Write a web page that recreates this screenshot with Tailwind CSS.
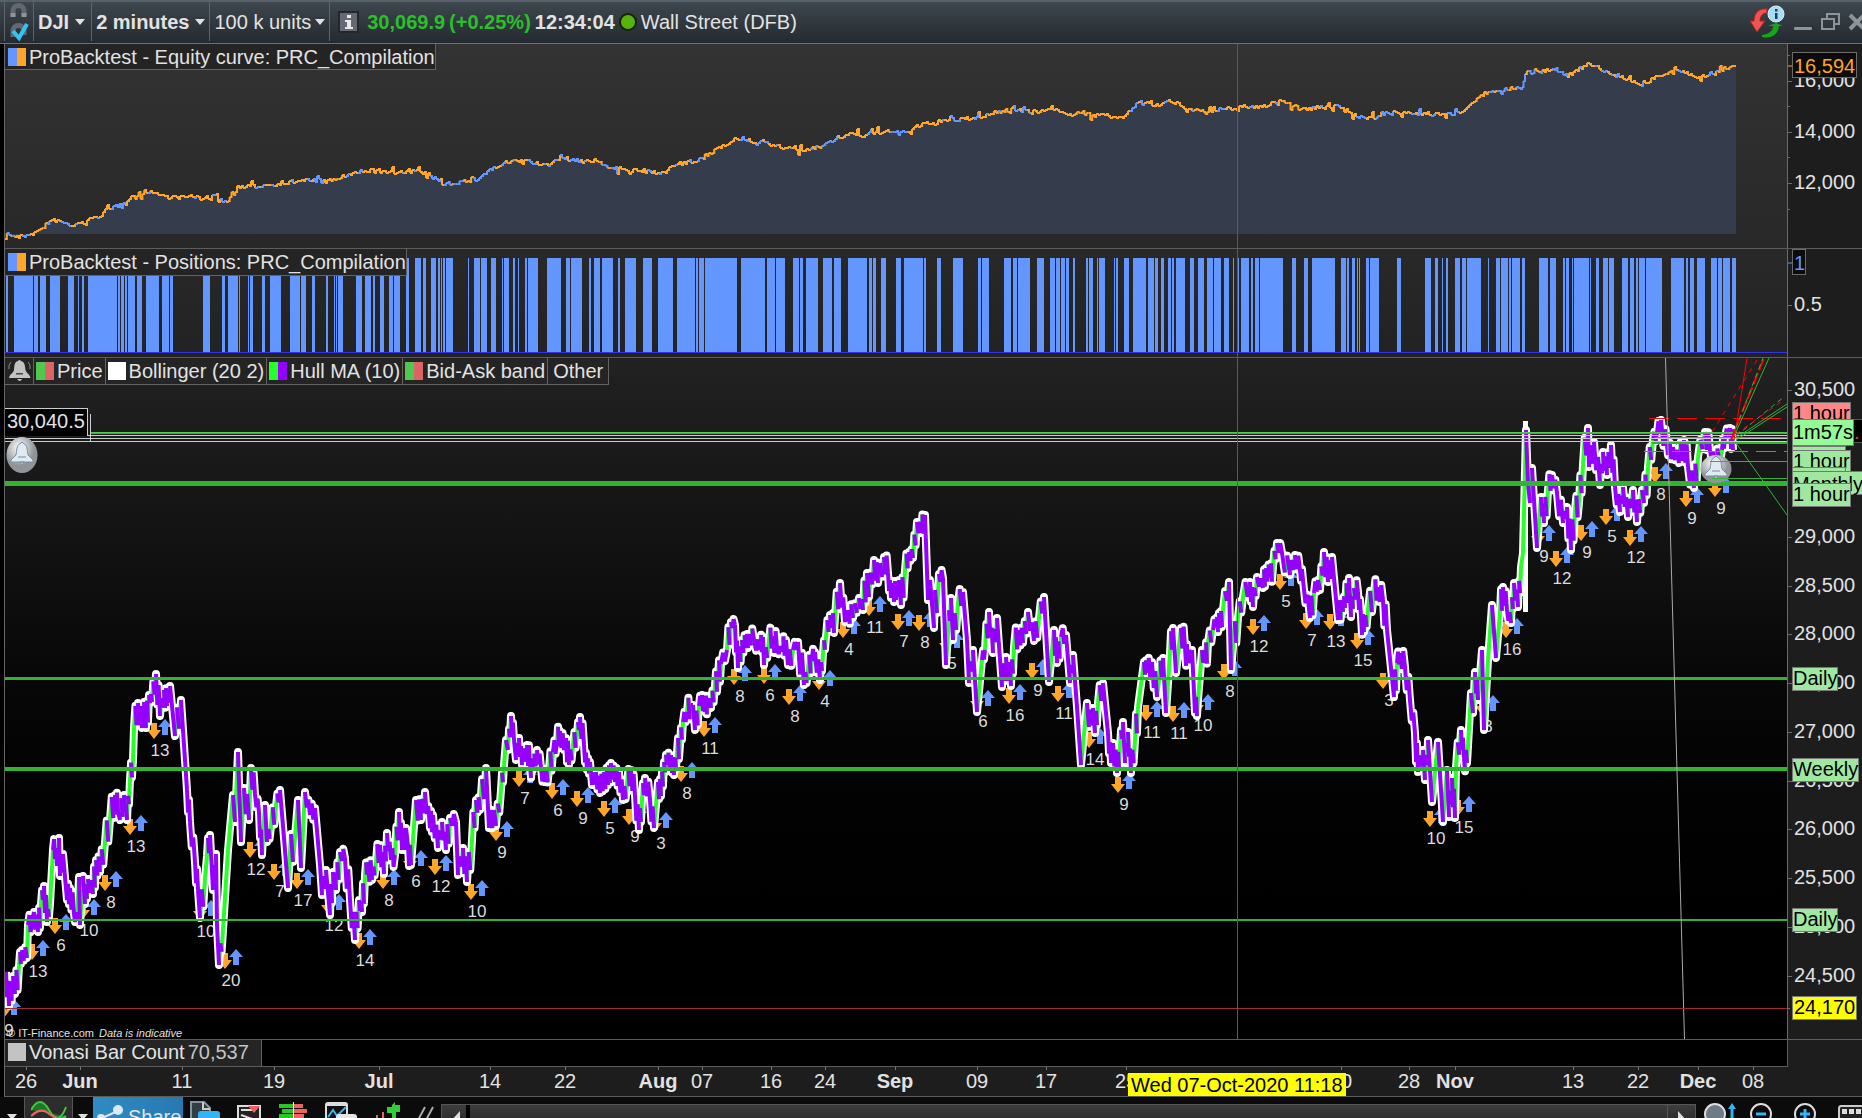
<!DOCTYPE html>
<html lang="en">

<head>
  <meta charset="UTF-8">
  <title>DJI - 2 minutes</title>
  <script src="https://cdn.jsdelivr.net/npm/@tailwindcss/browser@4"></script>
</head>

<body class="h-screen overflow-hidden bg-black text-[20px] leading-6 text-[#e2e2e2] font-['Liberation_Sans',Arial,sans-serif]">
  <div class="flex flex-col">

    <!-- Top bar -->
    <header class="flex h-11 items-stretch justify-between overflow-hidden border-t-2 border-b border-t-[#566068] border-b-[#6b7074] bg-linear-to-b from-[#3f474e] to-[#232a30] pb-0.5 pl-1">
      <div class="flex items-stretch whitespace-nowrap">
        <button class="flex w-[30px] items-center justify-center border-x border-[#5d656b]" aria-label="Link windows">
          <svg width="22" height="40" viewBox="0 0 22 40" fill="none">
            <path d="M5 14V9a5 5 0 0 1 11 0v5" stroke="#62686d" stroke-width="5" />
            <path d="M5 11v4M16 11v4" stroke="#8e9498" stroke-width="5" />
            <path d="M5 35v-6a5 5 0 0 1 11 0v4" stroke="#62686d" stroke-width="5" />
            <path d="M5 29l6 7 8-14" stroke="#35c3f3" stroke-width="4" />
          </svg>
        </button>
        <label class="flex items-center gap-1.5 border-r border-[#5d656b] pr-1.5 pl-1 font-bold">
          <select aria-label="Instrument" class="field-sizing-content appearance-none font-bold outline-none"><option>DJI</option></select>
          <svg width="10" height="6" viewBox="0 0 10 6"><path d="M0 0h10L5 6z" fill="#e2e2e2" /></svg>
        </label>
        <label class="flex items-center gap-1.5 border-r border-[#5d656b] pr-1 pl-1">
          <select aria-label="Timeframe" class="field-sizing-content appearance-none font-bold outline-none"><option>2 minutes</option></select>
          <svg width="10" height="6" viewBox="0 0 10 6"><path d="M0 0h10L5 6z" fill="#e2e2e2" /></svg>
        </label>
        <label class="flex items-center gap-1 border-r border-[#5d656b] pr-1 pl-1">
          <select aria-label="Units" class="field-sizing-content appearance-none outline-none"><option>100 k units</option></select>
          <svg width="10" height="6" viewBox="0 0 10 6"><path d="M0 0h10L5 6z" fill="#e2e2e2" /></svg>
        </label>
        <div class="flex items-center pl-2">
          <button class="mr-2 flex h-[22px] w-[21px] items-center justify-center border-2 border-[#24282c] bg-[#666973]" aria-label="Information">
            <svg width="12" height="16" viewBox="0 0 12 16" fill="#e8e8e8"><path d="M4 1h4v3H4zM2 6h6v7h2v2H2v-2h2V8H2z" /></svg>
          </button>
          <span class="font-bold text-[#2bbf2b]">30,069.9</span>
          <span class="ml-1 font-bold text-[#2bbf2b]">(+0.25%)</span>
          <span class="ml-1 font-bold">12:34:04</span>
          <span class="mx-1 size-[18px] rounded-full border-2 border-[#152406] bg-[#55b30b]"></span>
          <span>Wall Street (DFB)</span>
        </div>
      </div>
      <div class="flex items-center gap-2">
        <button aria-label="Synchronise">
          <svg width="36" height="36" viewBox="0 0 36 36">
            <path d="M17 5C9 4 4 9 4 17H0l7 11 8-11h-5c0-4 2-8 7-8z" fill="#f05353" stroke="#b02020" />
            <path d="M12 33c9 2 16-2 17-11h4l-7-3-8 3h5c0 5-4 8-11 9z" fill="#15a615" />
            <circle cx="26" cy="10" r="8" fill="#a7dcf5" stroke="#d8eefa" />
            <path d="M25 5h2.500v2.500H25zM25 9h2.500v6H25z" fill="#17405c" />
          </svg>
        </button>
        <button aria-label="Minimise">
          <svg width="18" height="20" viewBox="0 0 18 20"><rect y="15" width="18" height="3" rx="1" fill="#8e959a" /></svg>
        </button>
        <button aria-label="Restore">
          <svg width="20" height="20" viewBox="0 0 20 20" fill="none" stroke="#8e959a" stroke-width="2"><path d="M7 6V2h12v10h-4" /><rect x="2" y="7" width="12" height="10" /></svg>
        </button>
        <button class="-mr-1" aria-label="Close">
          <svg width="18" height="20" viewBox="0 0 18 20" stroke="#8e959a" stroke-width="4"><path d="M2 3l14 14M16 3L2 17" /></svg>
        </button>
      </div>
    </header>

    <main class="ml-1 border-l border-[#666] bg-[#1d1d1d]">
      <!-- Equity curve -->
      <section class="flex border-b border-[#5c5c5c]">
        <div class="relative min-w-0 flex-1 bg-linear-to-b from-[#333] to-[#282828]">
          <button class="absolute top-0 left-0 flex h-[26px] items-center gap-[3px] border-r border-b border-[#636363] bg-[#242424] pl-[3px] whitespace-nowrap">
            <span class="h-[18px] w-[18px] bg-linear-to-r from-[#6496ff] from-50% to-[#ffa528] to-50%"></span>ProBacktest - Equity curve: PRC_Compilation
          </button>
          <svg id="equity" class="block h-[204px] w-full" viewBox="5 44 1782 204" preserveAspectRatio="none"></svg>
        </div>
        <svg id="equityAxis" class="h-[204px] w-[75px] shrink-0" viewBox="1787 44 75 204"></svg>
      </section>

      <!-- Positions -->
      <section class="flex border-b border-[#5c5c5c]">
        <div class="relative min-w-0 flex-1 bg-linear-to-b from-[#292929] to-[#222]">
          <button class="absolute top-0 left-0 flex h-[27px] items-center gap-[3px] border-r border-b border-[#636363] bg-[#242424] pl-[3px] whitespace-nowrap">
            <span class="h-[18px] w-[18px] bg-linear-to-r from-[#6496ff] from-50% to-[#ffa528] to-50%"></span>ProBacktest - Positions: PRC_Compilation
          </button>
          <svg id="positions" class="block h-[108px] w-full" viewBox="5 249 1782 108" preserveAspectRatio="none"></svg>
        </div>
        <svg id="positionsAxis" class="h-[108px] w-[75px] shrink-0" viewBox="1787 249 75 108"></svg>
      </section>

      <!-- Price -->
      <section class="flex border-b border-[#5c5c5c]">
        <div class="relative min-w-0 flex-1 overflow-hidden bg-linear-to-b from-[#222] to-black">
          <div class="absolute top-0 left-0 flex h-[27px] items-stretch border-b border-[#636363] bg-[#242424] whitespace-nowrap">
            <button class="flex w-[29px] items-center justify-center border-r border-[#636363]" aria-label="Alerts">
              <svg width="25" height="24" viewBox="0 0 25 24" fill="#c2c2c2">
                <path d="M11 2q1.500-2 3 0c4 1 4 5 4.500 9 .5 3 4.500 4 5 8H2c.5-4 4.500-5 5-8 .5-4 0-8 4-9zM10 20h5q-2 4-5 0z" />
                <path d="M9 14h7v1.500H9z" fill="#444" />
                <path d="M4 3q-3 3-2 7M21 3q3 3 2 7" fill="none" stroke="#888" />
              </svg>
            </button>
            <button class="flex items-center gap-[3px] border-r border-[#636363] px-0.5">
              <span class="h-[18px] w-[18px] bg-linear-to-r from-[#50c850] from-50% to-[#dc6464] to-50%"></span>Price
            </button>
            <button class="flex items-center gap-[3px] border-r border-[#636363] px-0.5">
              <span class="h-[18px] w-[18px] bg-white"></span>Bollinger (20 2)
            </button>
            <button class="flex items-center gap-[3px] border-r border-[#636363] px-0.5">
              <span class="h-[18px] w-[18px] bg-linear-to-r from-[#28ff28] from-50% to-[#9600ff] to-50%"></span>Hull MA (10)
            </button>
            <button class="flex items-center gap-[3px] border-r border-[#636363] px-0.5">
              <span class="h-[18px] w-[18px] bg-linear-to-r from-[#50c850] from-50% to-[#dc6464] to-50%"></span>Bid-Ask band
            </button>
            <button class="border-r border-[#636363] px-[5px]">Other</button>
          </div>
          <svg id="price" class="block h-[681px] w-full" viewBox="5 358 1782 681" preserveAspectRatio="xMinYMin slice"></svg>
          <div class="absolute top-[50px] left-0 h-7 border-t border-r border-[#ccc] bg-black px-0.5">30,040.5</div>
          <small class="absolute bottom-0 left-0 px-0.5 text-[11px] leading-3">© IT-Finance.com <i class="ml-0.5">Data is indicative</i></small>
        </div>
        <div class="relative w-[75px] shrink-0 text-black">
          <svg id="priceAxis" class="h-[681px] w-[75px]" viewBox="1787 358 75 681"></svg>
          <div class="absolute top-[44px] left-[5px] h-6 border border-[#777] bg-[#ff8787] leading-5">1 hour</div>
          <div class="absolute top-[88px] left-[5px] h-4 w-[54px] border border-[#777] bg-[#a0e8a0]"></div>
          <div class="absolute top-[92px] left-[5px] h-6 border border-[#777] bg-[#a0e8a0] leading-5">1 hour</div>
          <div class="absolute top-[109px] left-[5px] h-4 w-[54px] border border-[#777] bg-[#a0e8a0]"></div>
          <div class="absolute top-[61px] left-[67px] h-6 w-2 border-y border-[#555] bg-black leading-6 text-[#e33]">.</div>
          <div class="absolute top-[61px] left-[5px] h-[27px] border border-[#777] bg-[#96fa96]">1m57s</div>
          <div class="absolute top-[113px] left-[5px] h-6 border border-[#777] bg-[#a0e8a0]">Monthly</div>
          <div class="absolute top-[125px] left-[5px] h-6 border border-[#777] bg-[#a0e8a0] leading-5">1 hour</div>
          <div class="absolute top-[309px] left-[5px] h-6 border border-[#777] bg-[#a0e8a0] leading-5">Daily</div>
          <div class="absolute top-[400px] left-[5px] h-6 border border-[#777] bg-[#a0e8a0] leading-5">Weekly</div>
          <div class="absolute top-[550px] left-[5px] h-6 border border-[#777] bg-[#a0e8a0] leading-5">Daily</div>
          <div class="absolute top-[638px] left-[5px] h-6 border border-[#777] bg-[#ff0] px-px leading-5">24,170</div>
        </div>
      </section>

      <!-- Bar count -->
      <section class="flex h-[27px]">
        <div class="flex-1 border-r border-b border-[#5c5c5c] bg-black">
          <button class="flex h-[26px] w-[257px] items-center gap-[3px] border-r border-[#636363] bg-[#242424] pb-0.5 pl-[3px]">
            <span class="h-[18px] w-[18px] bg-[#c3c3c3]"></span>Vonasi Bar Count <span class="text-[#c3c3c3]">70,537</span>
          </button>
        </div>
        <div class="w-[74px]"></div>
      </section>

      <!-- Time axis -->
      <section class="relative h-[30px] overflow-hidden border-b border-[#5c5c5c]">
        <svg id="timeAxis" class="block h-[30px] w-full" viewBox="5 1067 1857 30" preserveAspectRatio="xMinYMin slice"></svg>
        <div class="absolute top-[6px] left-[1123px] h-6 bg-[#ff0] px-[3px] whitespace-nowrap text-black">Wed 07-Oct-2020 11:18</div>
      </section>
    </main>

    <!-- Bottom toolbar -->
    <footer class="flex h-10 items-stretch overflow-hidden bg-[#0b0b0b]">
      <button class="flex w-[25px] items-center justify-center border-r border-[#555]" aria-label="More drawings"><svg width="10" height="6" viewBox="0 0 10 6"><path d="M0 0h10L5 6z" fill="#ddd" /></svg></button>
      <button class="w-12 border-r border-[#555] bg-[#2d2d2d] pl-1.5" aria-label="Indicators">
        <svg width="36" height="32" viewBox="0 0 36 32" fill="none" stroke-width="2"><path d="M0 9Q9-7 18 9q8 14 17 6" fill="#1b7a24" stroke="#41c641" /><path d="M0 15q10-9 17-3t19 7" stroke="#f36363" /><path d="M22 17q8 3 13-11" stroke="#41c641" /></svg>
      </button>
      <button class="flex w-5 items-center justify-center" aria-label="More indicators"><svg width="10" height="6" viewBox="0 0 10 6"><path d="M0 0h10L5 6z" fill="#ddd" /></svg></button>
      <button class="flex w-[90px] items-center gap-1 bg-linear-to-r from-[#2f8cc4] to-[#2878b0] pl-1">
        <svg width="27" height="28" viewBox="0 0 27 28" fill="#dce9f3" stroke="#dce9f3" stroke-width="2"><path d="M5 15L21 8M5 15l16 7" /><circle cx="4" cy="15" r="3" /><circle cx="21" cy="7" r="4" /><circle cx="21" cy="23" r="4" /></svg>Share
      </button>
      <div class="flex items-start gap-4 pt-1 pr-1.5 pl-[7px]">
        <button aria-label="Notes"><svg width="31" height="30" viewBox="0 0 31 30"><path d="M1 1h13l6 6v20H1z" fill="#333d45" stroke="#87939c" stroke-width="2" /><path d="M13 1v7h7" fill="none" stroke="#ccc" stroke-width="2" /><rect x="8" y="10" width="22" height="15" rx="3" fill="#31b5f5" /></svg></button>
        <button aria-label="Orders"><svg width="25" height="30" viewBox="0 0 25 30"><path d="M1 5h22v24H1z" fill="#222" stroke="#ddd" stroke-width="2" /><path d="M4 9h11M4 14l14 5M4 18h8" stroke="#ddd" stroke-width="2" /><path d="M11 5h12l-6 7z" fill="#f06060" /></svg></button>
        <button aria-label="Order book"><svg width="30" height="30" viewBox="0 0 30 30"><path d="M1 3h14v4H1zM4 8h11v4H4zM1 13h14v4H1z" fill="#29c529" /><path d="M16 3h9v4h-9zM16 8h13v4H16zM16 13h10v4H16z" fill="#ec6363" /><path d="M15 1h1v18h-1z" fill="#eee" /></svg></button>
        <button aria-label="Trade from chart"><svg width="35" height="30" viewBox="0 0 35 30"><rect x="1" y="1" width="23" height="27" rx="3" fill="#dcdcdc" /><path d="M3 5h19v14H3z" fill="#111" /><path d="M4 16l5-7 4 6 9-9" stroke="#36b6ef" stroke-width="2" fill="none" /><rect x="12" y="13" width="21" height="14" rx="3" fill="#e4e4e4" /></svg></button>
        <button aria-label="Candles"><svg width="26" height="30" viewBox="0 0 26 30"><path d="M2 14v10M8 11v10" stroke="#ec6363" stroke-width="2" /><path d="M12 6h5V4l3-3v3h5v7h-4v15h-4V12h-5z" fill="#2fcf3a" /></svg></button>
        <svg width="18" height="24" viewBox="0 0 18 24" stroke="#aaa" stroke-width="2"><path d="M0 21L8 6M8 21l8-15" /></svg>
      </div>
      <div class="mt-[7px] flex flex-1 border border-[#555] bg-linear-to-b from-[#3d3d3d] to-[#1c1c1c]">
        <button class="w-7 border-r-4 border-black pl-2" aria-label="Scroll left"><svg width="10" height="20" viewBox="0 0 10 20"><path d="M10 0v20L1 10z" fill="#ddd" /></svg></button>
        <span class="flex-1"></span>
        <button class="w-7 border-l border-[#555] pl-2.5" aria-label="Scroll right"><svg width="10" height="20" viewBox="0 0 10 20"><path d="M0 0v20l9-10z" fill="#ddd" /></svg></button>
      </div>
      <div class="flex items-start gap-3 pt-1.5 pl-2">
        <button aria-label="Vertical zoom"><svg width="34" height="26" viewBox="0 0 34 26"><circle cx="11" cy="11" r="10" fill="#6f7a87" stroke="#ddd" stroke-width="2" /><path d="M28 5v20" stroke="#31b5f5" stroke-width="3" /><path d="M24 6l4-6 4 6z" fill="#31b5f5" /></svg></button>
        <button aria-label="Zoom out"><svg width="26" height="26" viewBox="0 0 26 26"><circle cx="11" cy="11" r="10" fill="none" stroke="#ddd" stroke-width="2" /><path d="M6 11h10" stroke="#31b5f5" stroke-width="3" /></svg></button>
        <button class="ml-1.5" aria-label="Zoom in"><svg width="26" height="26" viewBox="0 0 26 26"><circle cx="11" cy="11" r="10" fill="none" stroke="#ddd" stroke-width="2" /><path d="M6 11h10M11 6v10" stroke="#31b5f5" stroke-width="3" /></svg></button>
        <button class="mt-0.5 ml-1.5" aria-label="Keyboard"><svg width="24" height="22" viewBox="0 0 24 22"><path d="M30 1H3Q1 1 1 4v17h30" fill="#222" stroke="#ccc" stroke-width="2" /><path d="M4 4h5v5H4zM11 4h5v5h-5zM18 4h5v5h-5z" fill="#ddd" /></svg></button>
      </div>
    </footer>
  </div>

  <script>
    const put = (id, html) => document.getElementById(id).insertAdjacentHTML('beforeend', html);
    const line = (x1, y1, x2, y2, color, w = 1, dash = '') =>
      `<line x1="${x1}" y1="${y1}" x2="${x2}" y2="${y2}" stroke="${color}" stroke-width="${w}" stroke-dasharray="${dash}"/>`;
    const GREEN = '#32b432', CROSS = '#a03c3c';

    // ---------- equity ----------
    const equity = [5,234, 18,237, 36,232, 53,220, 71,226, 89,220, 107,211, 119,204, 133,196, 148,191, 166,197, 202,197, 226,202, 237,188, 255,186, 291,182, 311,180, 327,182, 344,176, 368,170, 386,173, 410,170, 428,175, 442,184, 475,180, 487,171, 505,163, 522,160, 546,166, 560,157, 576,161, 594,161, 617,170, 641,171, 661,173, 677,164, 701,160, 718,147, 734,139, 760,142, 778,147, 808,151, 831,141, 849,133, 861,136, 885,131, 902,134, 920,125, 950,120, 974,118, 992,113, 1015,109, 1033,112, 1051,108, 1069,114, 1098,115, 1122,118, 1140,100, 1158,106, 1170,100, 1188,109, 1211,112, 1235,107, 1259,107, 1277,101, 1306,109, 1336,106, 1354,115, 1372,118, 1383,113, 1419,114, 1455,114, 1473,103, 1484,93, 1499,91, 1522,86, 1525,72, 1544,72, 1550,69, 1567,75, 1589,63, 1603,71, 1641,84, 1657,76, 1680,71, 1698,77, 1716,71, 1735,66];
    let seed = 7;
    const rnd = () => (seed = (seed * 16807) % 2147483647) / 2147483647;
    const curve = [];
    for (let i = 0; i < equity.length - 2; i += 2) {
      const [x1, y1, x2, y2] = equity.slice(i, i + 4);
      const n = Math.max(1, Math.round((x2 - x1) / 2));
      for (let k = 0; k < n; k++) {
        const jump = rnd() < .12 ? 12 : 4;
        curve.push([x1 + (x2 - x1) * k / n, Math.round(y1 + (y2 - y1) * k / n + (rnd() - .5) * jump)]);
      }
    }
    curve.push([1736, 66]);
    put('equity', `<path d="M5 234L${curve.map(p => p.join(' ')).join('L')}V234z" fill="#353d4d"/>`);
    let blue = false;
    for (let i = 1; i < curve.length; i++) {
      blue = rnd() < (blue ? .6 : .15);
      put('equity', `<path d="M${curve[i - 1]}H${curve[i][0]}V${curve[i][1]}" fill="none" stroke="${blue ? '#6496ff' : '#ffa528'}" stroke-width="2"/>`);
    }
    put('equity', line(1237.5, 44, 1237.5, 248, CROSS));

    // ---------- positions ----------
    const bars = [6,8,14,33,34,38,40,46,50,60,68,74,78,79,82,84,88,117,118,120,121,124,125,127,128,135,137,142,146,159,162,169,170,173,203,210,222,225,228,238,239,240,248,249,250,253,262,265,270,281,290,300,301,306,312,315,326,328,334,335,336,337,338,343,356,362,365,371,373,375,380,384,389,393,394,400,406,409,415,421,423,426,431,436,438,440,441,442,443,445,446,453,468,469,474,480,481,487,491,496,502,503,504,509,513,515,518,519,525,527,528,538,547,561,566,570,571,582,589,591,594,600,602,613,618,620,625,636,643,652,658,673,677,695,696,698,699,704,705,737,741,765,767,775,776,785,793,799,800,803,806,818,823,832,834,841,848,867,869,872,873,876,881,886,896,901,904,923,924,926,937,941,953,963,978,981,982,989,1004,1011,1013,1017,1018,1030,1037,1044,1050,1055,1056,1060,1061,1065,1066,1069,1073,1075,1086,1088,1089,1093,1097,1098,1099,1105,1114,1115,1116,1118,1124,1129,1133,1146,1148,1154,1155,1158,1161,1164,1168,1171,1172,1174,1176,1185,1190,1194,1198,1204,1207,1213,1214,1221,1224,1229,1233,1234,1237,1239,1241,1249,1251,1253,1255,1259,1260,1283,1292,1296,1304,1308,1312,1335,1341,1346,1347,1349,1352,1355,1357,1358,1359,1360,1366,1369,1370,1379,1397,1401,1425,1431,1435,1438,1442,1443,1446,1448,1455,1460,1462,1466,1467,1481,1488,1489,1496,1500,1501,1508,1509,1511,1512,1520,1522,1525,1539,1548,1550,1556,1563,1565,1566,1569,1572,1573,1574,1589,1590,1591,1596,1599,1603,1608,1609,1614,1622,1628,1630,1634,1636,1638,1639,1645,1646,1662,1671,1684,1686,1688,1690,1694,1697,1705,1711,1717,1718,1722,1723,1730,1732,1736];
    for (let i = 0; i < bars.length; i += 2) {
      put('positions', `<rect x="${bars[i]}" y="258" width="${bars[i + 1] - bars[i]}" height="94" fill="#6496ff"/>`);
    }
    put('positions', line(5, 352.5, 1787, 352.5, '#3232e6') + line(1237.5, 249, 1237.5, 357, CROSS));

    // ---------- price ----------
    // arrow pairs with the bar count below: x, y, count
    const marks = [3,1011,9, 32,952,13, 55,926,6, 83,911,10, 105,883,8, 130,827,13, 154,731,13, 200,912,10, 225,961,20, 250,850,12, 274,872,7, 297,881,17, 328,906,12, 359,941,14, 383,881,8, 410,862,6, 435,867,12, 471,892,10, 496,833,9, 519,779,7, 552,791,6, 577,799,9, 604,809,5, 629,817,9, 655,824,3, 681,774,8, 704,729,11, 734,677,8, 764,676,6, 789,697,8, 819,682,4, 843,630,4, 869,608,11, 898,622,7, 919,623,8, 946,644,5, 977,702,6, 1009,696,16, 1032,671,9, 1058,694,11, 1089,740,14, 1118,785,9, 1146,713,11, 1173,714,11, 1197,706,10, 1224,672,8, 1253,627,12, 1280,582,5, 1306,621,7, 1330,622,13, 1357,641,15, 1383,681,3, 1430,819,10, 1458,808,15, 1482,707,3, 1506,630,16, 1538,537,9, 1556,559,12, 1581,533,9, 1606,517,5, 1630,538,12, 1655,475,8, 1686,499,9, 1715,489,9];
    for (let i = 0; i < marks.length; i += 3) {
      const [x, y, n] = marks.slice(i, i + 3);
      put('price', `<path d="M${x - 3} ${y - 8}h6v7h4L${x} ${y + 8}l-7-9h4z" fill="#ffa528"/>
        <path d="M${x + 8} ${y + 4}h6v-8h4L${x + 11} ${y - 12}l-7 8h4z" fill="#6496ff"/>
        <text x="${x + 6}" y="${y + 25}" font-size="17" text-anchor="middle" fill="#dcdcdc">${n}</text>`);
    }

    const swings = [6,972,9,1006,13,976,15,994,19,966,22,950,27,958,28,925,32,922,34,912,38,932,41,904,44,886,47,922,50,904,53,850,56,848,57,866,59,838,60,876,63,854,67,900,70,888,74,914,77,920,79,877,80,925,83,876,85,904,88,879,93,894,96,860,100,872,105,842,110,820,115,795,118,812,120,820,124,795,127,820,130,780,133,760,134,728,138,703,142,728,144,702,146,728,149,695,152,702,156,674,160,716,164,690,167,706,170,686,175,736,181,700,183,730,187,790,190,822,195,862,198,890,200,918,205,878,207,856,210,835,213,890,216,854,217,925,219,965,223,930,228,850,233,795,235,822,238,752,241,842,244,788,249,820,251,768,255,794,259,812,262,855,265,805,267,842,271,826,276,806,280,790,284,838,288,888,291,834,293,862,298,800,301,868,305,792,310,815,315,808,320,865,322,895,326,870,330,915,333,872,336,890,340,852,345,858,350,900,355,940,359,900,362,912,365,875,368,862,372,880,376,862,380,845,384,874,387,833,391,860,395,855,399,812,402,850,406,828,408,846,411,865,416,800,421,820,425,792,430,828,433,815,438,848,442,822,446,850,450,818,456,822,458,875,463,848,467,882,472,840,476,800,480,810,486,768,489,828,494,810,496,826,501,790,504,765,506,740,508,750,511,716,514,740,516,760,519,738,522,765,527,745,530,766,533,770,537,750,541,768,545,782,549,770,553,752,557,742,560,731,564,750,566,738,569,765,573,745,577,735,580,717,584,745,587,770,590,762,592,785,596,772,600,793,604,772,608,785,611,763,615,782,619,772,623,800,627,785,631,770,635,795,639,830,642,800,645,778,650,800,654,828,658,782,661,796,664,762,667,765,671,755,674,775,677,752,680,745,683,722,687,712,691,705,693,705,695,730,699,706,702,695,705,712,708,698,711,708,715,685,718,678,721,664,727,650,731,622,735,625,738,668,742,640,746,648,749,634,754,640,760,650,763,637,764,665,769,640,773,636,777,648,782,652,786,640,788,665,793,650,798,642,804,685,808,670,812,658,815,652,820,680,823,653,826,637,830,615,832,628,835,618,840,583,845,622,848,610,853,618,859,598,863,610,867,573,869,597,874,560,878,583,884,557,888,573,891,598,893,583,896,600,899,580,901,605,905,570,909,552,913,558,917,522,921,533,925,515,928,600,930,580,934,628,935,590,937,613,939,574,943,578,946,665,948,633,951,598,953,640,958,603,963,592,967,640,969,683,973,650,977,712,982,660,985,650,989,612,993,653,997,618,1002,687,1006,657,1011,686,1014,647,1019,630,1023,643,1028,612,1034,641,1039,618,1044,597,1049,682,1054,630,1057,663,1061,637,1066,635,1070,683,1073,655,1077,707,1081,765,1087,703,1089,727,1093,708,1095,733,1098,703,1103,683,1108,733,1111,763,1113,743,1117,773,1120,747,1123,722,1125,763,1128,732,1131,773,1135,740,1138,707,1144,662,1147,673,1152,662,1157,697,1159,680,1163,658,1166,713,1170,653,1173,628,1176,673,1181,628,1185,647,1188,663,1192,650,1195,713,1198,700,1202,650,1205,663,1208,643,1213,630,1217,617,1220,628,1223,610,1229,582,1231,670,1233,647,1238,617,1243,597,1250,582,1253,607,1257,577,1263,588,1266,568,1270,578,1273,567,1277,543,1282,553,1290,575,1295,555,1300,570,1303,580,1310,618,1314,593,1318,580,1320,590,1324,552,1328,582,1332,557,1338,620,1342,600,1345,608,1349,578,1351,617,1354,588,1358,592,1361,617,1364,632,1368,610,1374,593,1378,587,1383,600,1387,630,1394,697,1397,663,1400,653,1405,667,1410,700,1415,733,1418,772,1423,750,1425,780,1428,740,1432,802,1438,742,1443,822,1447,770,1449,817,1452,778,1455,818,1456,767,1461,730,1464,758,1467,763,1471,693,1473,713,1475,672,1478,700,1482,650,1484,730,1488,660,1492,605,1496,658,1500,613,1503,587,1507,610,1511,623,1514,583,1518,607,1521,567,1523,553,1526,430,1528,483,1530,503,1532,468,1537,548,1541,497,1544,523,1548,490,1552,475,1557,493,1563,523,1567,507,1571,550,1575,510,1579,503,1583,465,1588,428,1589,467,1594,442,1600,485,1603,452,1607,475,1611,445,1615,487,1620,512,1623,487,1628,517,1633,490,1637,522,1642,490,1644,503,1648,467,1653,440,1657,433,1661,420,1668,455,1673,447,1679,463,1684,440,1688,467,1694,488,1698,457,1705,432,1710,450,1715,463,1722,450,1725,437,1730,428,1733,450];
    // break the calmer swings into a pullback and a continuation
    const path = [];
    for (let i = 0; i < swings.length - 2; i += 2) {
      const [x1, y1, x2, y2] = swings.slice(i, i + 4);
      path.push(x1, y1);
      if (x2 - x1 >= 3 && Math.abs(y2 - y1) < 45) {
        const s = y2 > y1 ? 1 : -1, dx = x2 - x1, dy = y2 - y1, back = 4 + rnd() * 7;
        path.push(x1 + dx * .35, y1 + dy * .5 + s * back, x1 + dx * .65, y1 + dy * .5 - s * back);
      }
    }
    path.push(1733, 450);
    put('price', `<polyline points="${path.join(' ')}" fill="none" stroke="#fff" stroke-width="8" stroke-linejoin="round"/>` + line(1525.5, 421, 1525.5, 612, '#fff', 5));
    // Hull MA: rising legs in green first, everything else in purple over them
    let up = '', down = '';
    for (let i = 0; i < path.length - 2; i += 2) {
      const [x1, y1, x2, y2] = path.slice(i, i + 4);
      const d = `M${x1} ${y1}L${x2} ${y2}`;
      if (y2 < y1 - 12) up += d; else down += d;
    }
    put('price', `<path d="${up}" stroke="#28ff28" stroke-width="4"/><path d="${down}" stroke="#9600ff" stroke-width="4"/>`);

    put('price',
      line(91, 432.5, 1787, 432.5, '#50c850') + line(91, 433.5, 1787, 433.5, '#c86464') +
      line(5, 435.5, 1787, 435.5, '#ccc') + line(5, 438.5, 1787, 438.5, '#ccc') + line(5, 441.5, 1787, 441.5, '#ccc') +
      line(90.5, 414, 90.5, 441, '#ccc') +
      line(5, 483.5, 1787, 483.5, GREEN, 5) + line(5, 678.5, 1787, 678.5, GREEN, 3) +
      line(5, 769, 1787, 769, GREEN, 4) + line(5, 920, 1787, 920, GREEN, 2) +
      line(1652, 443, 1787, 443, GREEN, 2) + line(1655, 437.5, 1787, 437.5, GREEN) +
      line(1644, 451.5, 1787, 451.5, GREEN, 1, '20 8') + line(1649, 418.5, 1787, 418.5, '#f00', 1, '20 8') +
      line(1734, 440, 1747, 358, '#f00', 1) + line(1731, 440, 1764, 358, '#f00', 2, '12 3') +
      line(1712, 432, 1757, 360, '#f00', 1, '5 5') + line(1736, 432, 1769, 358, GREEN, 1) +
      line(1736, 428, 1763, 358, GREEN, 1, '5 4') + line(1736, 438, 1787, 404, GREEN, 1) +
      line(1736, 440, 1787, 407, GREEN, 1) + line(1736, 436, 1785, 396, GREEN, 1, '5 4') +
      line(1736, 434, 1785, 399, '#f00', 1, '5 5') + line(1736, 443, 1787, 515, GREEN, 1) +
      line(1665.5, 358, 1684.5, 1039, '#aaa') +
      line(5, 1008.5, 1787, 1008.5, '#a52a2a') + line(1237.5, 358, 1237.5, 1039, CROSS));

    // round alert badges
    put('price', `<radialGradient id="ball" cx=".4" cy=".3"><stop offset="0" stop-color="#fff"/><stop offset="1" stop-color="#909498"/></radialGradient>`);
    for (const [x, y] of [[22, 455], [1716, 469]]) {
      put('price', `<ellipse cx="${x}" cy="${y}" rx="15.500" ry="${x < 100 ? 18 : 14}" fill="url(#ball)"/>
        <path d="M${x - 1} ${y - 12}q1-2 2 0c5 2 4 8 5 12l5 5v2h-22v-2l5-5c1-4 0-10 5-12zM${x - 2} ${y + 7}h4l-2 3z" fill="#dfeaf3" stroke="#7c8da0"/>
        <path d="M${x - 4} ${y + 2}h8" stroke="#7c8da0"/>`);
    }
    put('price', line(1710, 461.5, 1787, 461.5, GREEN) + line(1712, 478.5, 1787, 478.5, GREEN));

    // ---------- axes ----------
    const axis = (id, top, bottom, labels, minor) => {
      put(id, line(1787.5, top, 1787.5, bottom, '#6b6b6b'));
      for (const [y, text] of labels) {
        put(id, line(1788, y, 1792, y, '#6b6b6b') + `<text x="1794" y="${Math.floor(y) + 6}" font-size="20" fill="#e2e2e2">${text}</text>`);
      }
      for (const y of minor) put(id, line(1788, y, 1790, y, '#6b6b6b'));
    };
    const box = (y, w, text, color) => `<rect x="1792.500" y="${y - 13.500}" width="${w}" height="25" fill="#0c0c0c" stroke="#6b6b6b"/>
      <text x="1794" y="${y + 7}" font-size="20" fill="${color}">${text}</text>` + line(1788, y, 1792, y, color);
    axis('equityAxis', 44, 248, [[81.5, '16,000'], [132.5, '14,000'], [183.5, '12,000']], [55.5, 106.5, 157.5, 209.5]);
    put('equityAxis', box(66, 64, '16,594', '#ffa528'));
    axis('positionsAxis', 249, 357, [[305.5, '0.5']], []);
    put('positionsAxis', box(263, 13, '1', '#6496ff'));
    axis('priceAxis', 358, 1039, [[390.5, '30,500'], [537.5, '29,000'], [586.5, '28,500'], [634.5, '28,000'], [683.5, '27,500'], [732.5, '27,000'], [781.5, '26,500'], [829.5, '26,000'], [878.5, '25,500'], [927.5, '25,000'], [976.5, '24,500']], [1008.5]);

    const dates = [[26, '26'], [80, 'Jun', 1], [182, '11'], [274, '19'], [379, 'Jul', 1], [490, '14'], [565, '22'], [658, 'Aug', 1], [702, '07'], [771, '16'], [825, '24'], [895, 'Sep', 1], [977, '09'], [1046, '17'], [1126, '25'], [1341, '20'], [1409, '28'], [1455, 'Nov', 1], [1573, '13'], [1638, '22'], [1698, 'Dec', 1], [1753, '08']];
    for (const [x, text, bold] of dates) {
      put('timeAxis', line(x + .5, 1067, x + .5, 1070, '#777') + `<text x="${x}" y="1088" font-size="20" text-anchor="middle" fill="#e2e2e2" font-weight="${bold ? 700 : 400}">${text}</text>`);
    }
  </script>
</body>

</html>
